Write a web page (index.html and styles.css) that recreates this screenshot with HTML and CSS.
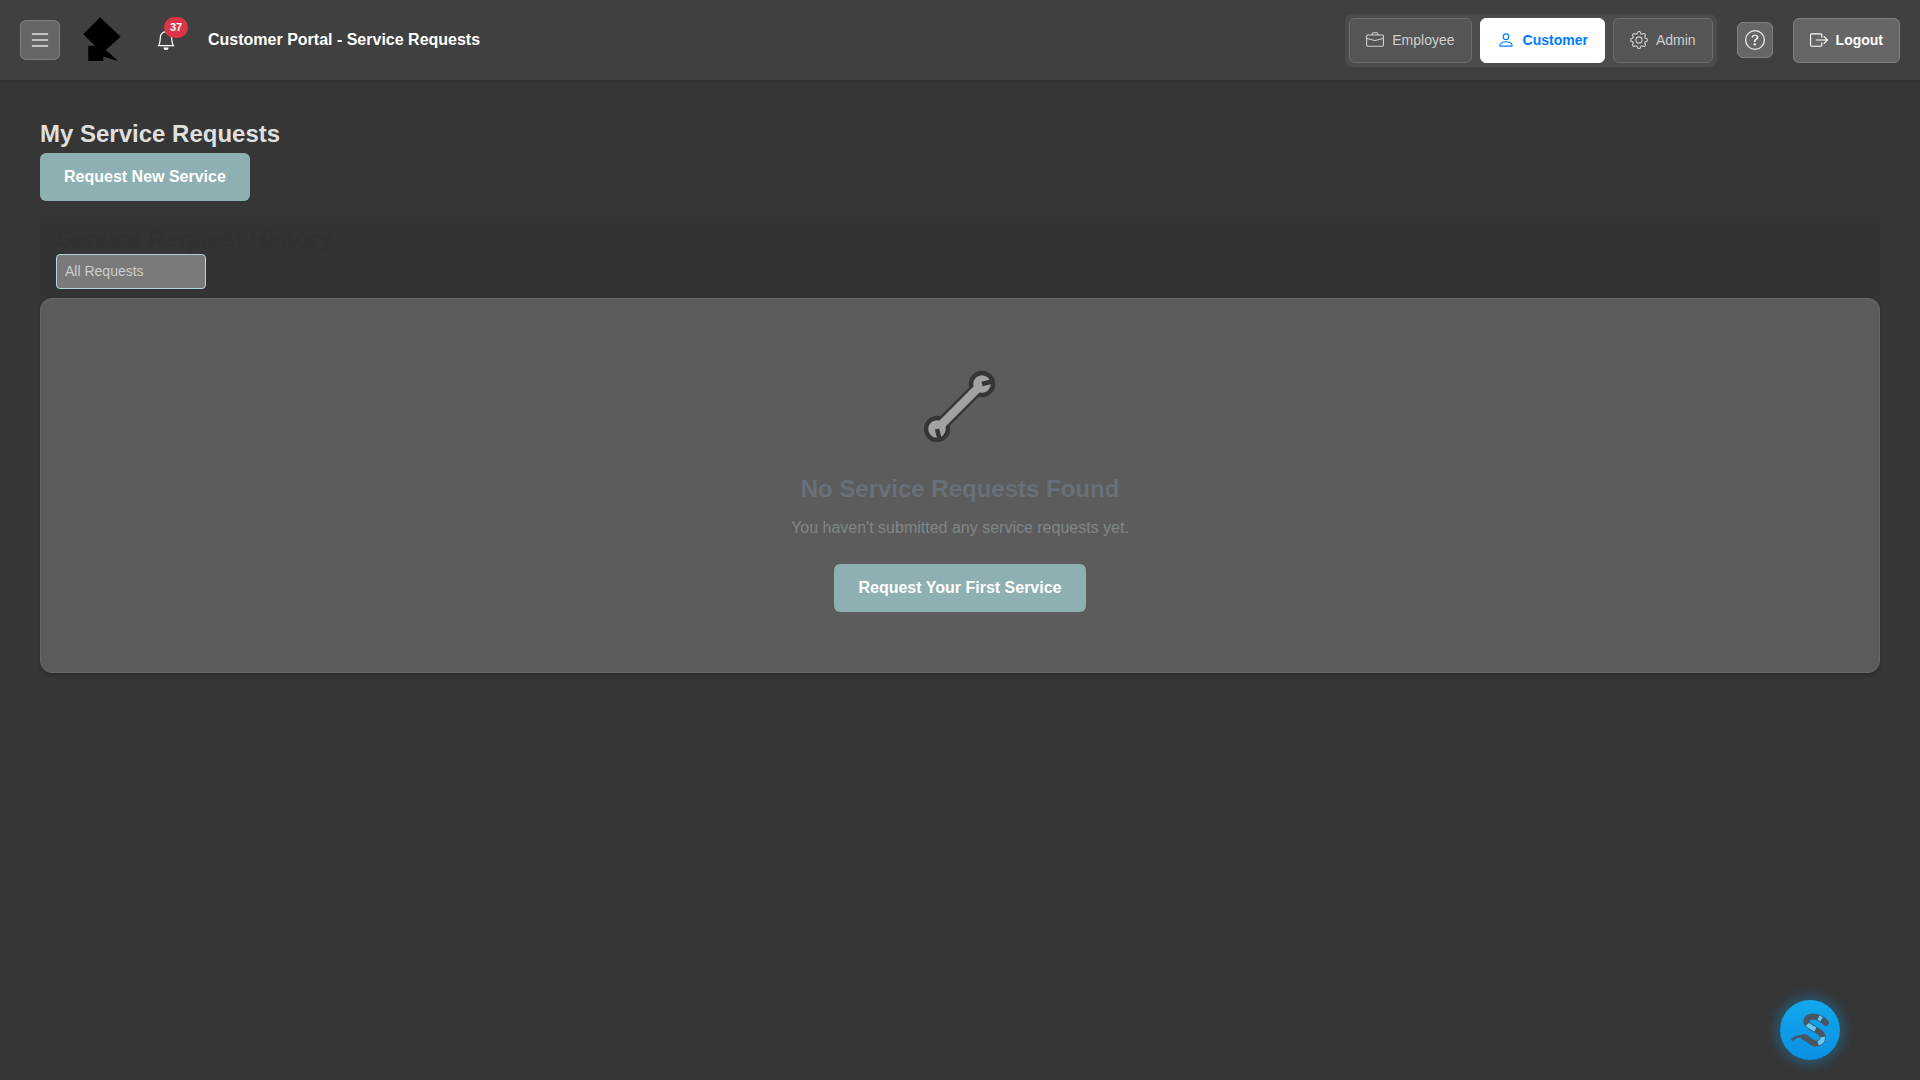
FILE: index.html
```html
<!DOCTYPE html>
<html lang="en">
<head>
<meta charset="utf-8">
<title>Customer Portal - Service Requests</title>
<link rel="stylesheet" href="styles.css">
</head>
<body>
<header class="topbar">
  <button class="menu-btn" type="button" aria-label="Menu">
    <svg class="icon-menu" viewBox="0 0 16 16" fill="currentColor"><path d="M2.5 12a.5.5 0 0 1 .5-.5h10a.5.5 0 0 1 0 1H3a.5.5 0 0 1-.5-.5zm0-4a.5.5 0 0 1 .5-.5h10a.5.5 0 0 1 0 1H3a.5.5 0 0 1-.5-.5zm0-4a.5.5 0 0 1 .5-.5h10a.5.5 0 0 1 0 1H3a.5.5 0 0 1-.5-.5z"/></svg>
  </button>
  <svg class="logo" viewBox="0 0 38 44"><path d="M17 .3 37.700 19.700 22.700 33 35.300 44 20.300 39.700V44H5.300V28.700H12L.3 17.300Z" fill="#000"/></svg>
  <div class="bell">
    <svg class="icon-bell" viewBox="0 0 16 16" fill="currentColor"><path d="M8 16a2 2 0 0 0 2-2H6a2 2 0 0 0 2 2zM8 1.918l-.797.161A4.002 4.002 0 0 0 4 6c0 .628-.134 2.197-.459 3.742-.16.767-.376 1.566-.663 2.258h10.244c-.287-.692-.502-1.49-.663-2.258C12.134 8.197 12 6.628 12 6a4.002 4.002 0 0 0-3.203-3.92L8 1.917zM14.22 12c.223.447.481.801.78 1H1c.299-.199.557-.553.78-1C2.68 10.2 3 6.88 3 6c0-2.42 1.72-4.44 4.005-4.901a1 1 0 1 1 1.99 0A5.002 5.002 0 0 1 13 6c0 .88.32 4.2 1.22 6z"/></svg>
    <span class="badge">37</span>
  </div>
  <div class="page-title">Customer Portal - Service Requests</div>
  <div class="top-actions">
    <nav class="role-group">
      <a class="role-btn">
        <svg class="icon" viewBox="0 0 16 16" fill="currentColor"><path d="M6.500 1A1.500 1.500 0 0 0 5 2.500V3H1.500A1.500 1.500 0 0 0 0 4.500v8A1.500 1.500 0 0 0 1.500 14h13a1.500 1.500 0 0 0 1.500-1.500v-8A1.500 1.500 0 0 0 14.500 3H11v-.5A1.500 1.500 0 0 0 9.500 1h-3zm0 1h3a.5.5 0 0 1 .5.5V3H6v-.5a.5.5 0 0 1 .5-.5zm1.886 6.914L15 7.151V12.500a.5.5 0 0 1-.5.5h-13a.5.5 0 0 1-.5-.5V7.150l6.614 1.764a1.500 1.500 0 0 0 .772 0zM1.500 4h13a.5.5 0 0 1 .5.5v1.616L8.129 7.948a.5.5 0 0 1-.258 0L1 6.116V4.500a.5.5 0 0 1 .5-.5z"/></svg>
        Employee
      </a>
      <a class="role-btn role-active">
        <svg class="icon" viewBox="0 0 16 16" fill="currentColor"><path d="M8 8a3 3 0 1 0 0-6 3 3 0 0 0 0 6zm2-3a2 2 0 1 1-4 0 2 2 0 0 1 4 0zm4 8c0 1-1 1-1 1H3s-1 0-1-1 1-4 6-4 6 3 6 4zm-1-.004c-.001-.246-.154-.986-.832-1.664C11.516 10.680 10.289 10 8 10c-2.290 0-3.516.680-4.168 1.332-.678.678-.83 1.418-.832 1.664h10z"/></svg>
        Customer
      </a>
      <a class="role-btn">
        <svg class="icon" viewBox="0 0 16 16" fill="currentColor"><path d="M8 4.754a3.246 3.246 0 1 0 0 6.492 3.246 3.246 0 0 0 0-6.492zM5.754 8a2.246 2.246 0 1 1 4.492 0 2.246 2.246 0 0 1-4.492 0z"/><path d="M9.796 1.343c-.527-1.790-3.065-1.790-3.592 0l-.094.319a.873.873 0 0 1-1.255.52l-.292-.16c-1.640-.892-3.433.902-2.540 2.541l.159.292a.873.873 0 0 1-.52 1.255l-.319.094c-1.790.527-1.790 3.065 0 3.592l.319.094a.873.873 0 0 1 .52 1.255l-.16.292c-.892 1.640.901 3.434 2.541 2.540l.292-.159a.873.873 0 0 1 1.255.52l.094.319c.527 1.790 3.065 1.790 3.592 0l.094-.319a.873.873 0 0 1 1.255-.52l.292.16c1.640.893 3.434-.902 2.540-2.541l-.159-.292a.873.873 0 0 1 .52-1.255l.319-.094c1.790-.527 1.790-3.065 0-3.592l-.319-.094a.873.873 0 0 1-.52-1.255l.16-.292c.893-1.640-.902-3.433-2.541-2.540l-.292.159a.873.873 0 0 1-1.255-.52l-.094-.319zm-2.633.283c.246-.835 1.428-.835 1.674 0l.094.319a1.873 1.873 0 0 0 2.693 1.115l.291-.16c.764-.415 1.600.42 1.184 1.185l-.159.292a1.873 1.873 0 0 0 1.116 2.692l.318.094c.835.246.835 1.428 0 1.674l-.319.094a1.873 1.873 0 0 0-1.115 2.693l.16.291c.415.764-.42 1.600-1.185 1.184l-.291-.159a1.873 1.873 0 0 0-2.693 1.116l-.094.318c-.246.835-1.428.835-1.674 0l-.094-.319a1.873 1.873 0 0 0-2.692-1.115l-.292.16c-.764.415-1.600-.42-1.184-1.185l.159-.291A1.873 1.873 0 0 0 1.945 8.930l-.319-.094c-.835-.246-.835-1.428 0-1.674l.319-.094A1.873 1.873 0 0 0 3.060 4.377l-.16-.292c-.415-.764.42-1.600 1.185-1.184l.292.159a1.873 1.873 0 0 0 2.692-1.115l.094-.319z"/></svg>
        Admin
      </a>
    </nav>
    <button class="help-btn" type="button" aria-label="Help">
      <svg class="icon-help" viewBox="0 0 16 16" fill="currentColor"><path d="M8 15A7 7 0 1 1 8 1a7 7 0 0 1 0 14zm0 1A8 8 0 1 0 8 0a8 8 0 0 0 0 16z"/><path d="M5.255 5.786a.237.237 0 0 0 .241.247h.825c.138 0 .248-.113.266-.25.09-.656.54-1.134 1.342-1.134.686 0 1.314.343 1.314 1.168 0 .635-.374.927-.965 1.371-.673.489-1.206 1.060-1.168 1.987l.003.217a.25.25 0 0 0 .25.246h.811a.25.25 0 0 0 .25-.25v-.105c0-.718.273-.927 1.010-1.486.609-.463 1.244-.977 1.244-2.056 0-1.511-1.276-2.241-2.673-2.241-1.267 0-2.655.59-2.75 2.286zm1.557 5.763c0 .533.425.927 1.010.927.609 0 1.028-.394 1.028-.927 0-.552-.42-.94-1.029-.94-.584 0-1.009.388-1.009.94z"/></svg>
    </button>
    <button class="logout-btn" type="button">
      <svg class="icon" viewBox="0 0 16 16" fill="currentColor"><path d="M10 12.500a.5.5 0 0 1-.5.5h-8a.5.5 0 0 1-.5-.5v-9a.5.5 0 0 1 .5-.5h8a.5.5 0 0 1 .5.5v2a.5.5 0 0 0 1 0v-2A1.500 1.500 0 0 0 9.500 2h-8A1.500 1.500 0 0 0 0 3.500v9A1.500 1.500 0 0 0 1.500 14h8a1.500 1.500 0 0 0 1.500-1.500v-2a.5.5 0 0 0-1 0v2z"/><path d="M15.854 8.354a.5.5 0 0 0 0-.708l-3-3a.5.5 0 0 0-.708.708L14.293 7.500H5.500a.5.5 0 0 0 0 1h8.793l-2.147 2.146a.5.5 0 0 0 .708.708l3-3z"/></svg>
      Logout
    </button>
  </div>
</header>

<main class="content">
  <h1 class="heading">My Service Requests</h1>
  <button class="primary-btn" type="button">Request New Service</button>
  <section class="history">
    <h2 class="history-title">Service Request History</h2>
    <select class="filter"><option>All Requests</option></select>
  </section>
  <section class="empty-card">
    <svg class="wrench" viewBox="0 0 72 72">
      <g fill="none">
        <circle cx="13" cy="59" r="11" fill="#a2a2a2" stroke="#363636" stroke-width="4.500"/>
        <circle cx="58" cy="14" r="11" fill="#a2a2a2" stroke="#363636" stroke-width="4.500"/>
        <path d="M19 53 52 20" stroke="#363636" stroke-width="13.500"/>
        <path d="M14 58 57 15" stroke="#a2a2a2" stroke-width="8.500"/>
        <path d="M58 14 70 11" stroke="#363636" stroke-width="4.500"/>
        <path d="M13 59 16 71" stroke="#363636" stroke-width="4.500"/>
      </g>
    </svg>
    <h3 class="empty-title">No Service Requests Found</h3>
    <p class="empty-text">You haven't submitted any service requests yet.</p>
    <button class="primary-btn" type="button">Request Your First Service</button>
  </section>
</main>

<div class="assistant">
  <svg class="snake" viewBox="0 0 60 60" fill="none">
    <path d="M26 37.500C21 35.500 16 36.500 12.500 39.500" stroke="#4a5560" stroke-width="2.500" stroke-linecap="round"/>
    <path d="M46 23C41 17 31 14 27 19C24 25 33 28 38 31C45 35 44 43 36 43.500C31 44 28 38 24 37" stroke="#4a5560" stroke-width="6" stroke-linecap="round"/>
    <path pathLength="100" d="M46 23C41 17 31 14 27 19C24 25 33 28 38 31C45 35 44 43 36 43.500C31 44 28 38 24 37" stroke="#62c8f5" stroke-width="4.500" stroke-dasharray="0 8 5 25 13 15 12 100"/>
  </svg>
</div>
</body>
</html>
```

FILE: styles.css
```css
* { box-sizing: border-box; }

html, body { height: 100%; }

body {
  margin: 0;
  background: #363636;
  color: #e5e5e5;
  font-family: "Liberation Sans", Arial, sans-serif;
  overflow: hidden;
}

button { font-family: inherit; cursor: pointer; }

.topbar {
  display: flex;
  align-items: center;
  height: 80px;
  padding: 0 20px;
  background: #404040;
  box-shadow: 0 1px 3px rgba(0, 0, 0, .12);
}

.menu-btn {
  display: flex;
  align-items: center;
  justify-content: center;
  width: 40px;
  height: 40px;
  padding: 0;
  border: 1px solid #808080;
  border-radius: 6px;
  background: #666666;
  color: #e2e2e2;
}

.icon-menu { width: 24px; height: 24px; }

.logo {
  width: 38px;
  height: 44px;
  margin-left: 23px;
  margin-bottom: 2px;
}

.bell {
  position: relative;
  width: 20px;
  height: 20px;
  margin-left: 35px;
  color: #fff;
}

.icon-bell { display: block; width: 20px; height: 20px; }

.badge {
  position: absolute;
  top: -13px;
  left: 8px;
  width: 24px;
  height: 21px;
  border-radius: 11px;
  background: #dc3545;
  color: #fff;
  font-size: 11px;
  font-weight: 700;
  line-height: 21px;
  text-align: center;
}

.page-title {
  margin-left: 32px;
  color: #fff;
  font-size: 16px;
  font-weight: 700;
}

.top-actions {
  display: flex;
  align-items: center;
  gap: 20px;
  margin-left: auto;
}

.role-group {
  display: flex;
  gap: 8px;
  padding: 4px;
  border-radius: 8px;
  background: #4c4c4c;
}

.role-btn {
  display: flex;
  align-items: center;
  gap: 8px;
  height: 45px;
  padding: 0 16px;
  border: 1px solid #6e6e6e;
  border-radius: 6px;
  background: #555555;
  color: #cfcfcf;
  font-size: 14px;
}

.role-active {
  border-color: #fff;
  background: #fff;
  color: #007bff;
  font-weight: 700;
}

.icon { width: 18px; height: 18px; flex: none; }

.help-btn {
  display: flex;
  align-items: center;
  justify-content: center;
  width: 36px;
  height: 36px;
  padding: 0;
  border: 1px solid #808080;
  border-radius: 6px;
  background: #666666;
  color: #f0f0f0;
}

.icon-help { width: 20px; height: 20px; }

.logout-btn {
  display: flex;
  align-items: center;
  gap: 8px;
  height: 45px;
  padding: 0 16px;
  border: 1px solid #808080;
  border-radius: 6px;
  background: #666666;
  color: #fff;
  font-size: 14px;
  font-weight: 700;
}

.content {
  display: flex;
  flex-direction: column;
  align-items: flex-start;
  padding: 39px 40px 0;
}

.heading {
  margin: 0 0 5px;
  color: #dfdfdf;
  font-size: 24px;
  font-weight: 700;
  line-height: 29px;
}

.primary-btn {
  height: 48px;
  padding: 0 24px;
  border: 0;
  border-radius: 6px;
  background: #8eb0b2;
  color: #fff;
  font-size: 16px;
  font-weight: 700;
}

.history {
  align-self: stretch;
  margin-top: 16px;
  padding: 7px 16px 9px;
  background: #333333;
}

.history-title {
  margin: 0 0 1px;
  color: #313131;
  font-size: 24px;
  font-weight: 700;
  line-height: 29px;
}

.filter {
  display: block;
  width: 150px;
  height: 35px;
  padding: 0 8px 2px;
  border: 1px solid #b0d6da;
  border-radius: 4px;
  background: #7a7a7a;
  color: #cdcdcd;
  font-family: inherit;
  font-size: 14px;
  appearance: none;
}

.empty-card {
  display: flex;
  flex-direction: column;
  align-items: center;
  align-self: stretch;
  height: 375px;
  padding-top: 71px;
  border: 1px solid #686868;
  border-radius: 12px;
  background: #5c5c5c;
  box-shadow: 0 2px 4px rgba(0, 0, 0, .2);
}

.wrench { width: 72px; height: 72px; display: block; }

.empty-title {
  margin: 32px 0 0;
  color: #687079;
  font-size: 24px;
  font-weight: 700;
  line-height: 29px;
}

.empty-text {
  margin: 16px 0 0;
  color: #808788;
  font-size: 16px;
  line-height: 18px;
}

.empty-card .primary-btn { margin-top: 27px; }

.assistant {
  position: fixed;
  left: 1780px;
  top: 1000px;
  width: 60px;
  height: 60px;
  border-radius: 50%;
  background: linear-gradient(180deg, #12a8ee, #0a90e2);
  box-shadow: 0 0 10px 6px rgba(10, 160, 230, .26);
}

.snake { display: block; width: 60px; height: 60px; }
```
